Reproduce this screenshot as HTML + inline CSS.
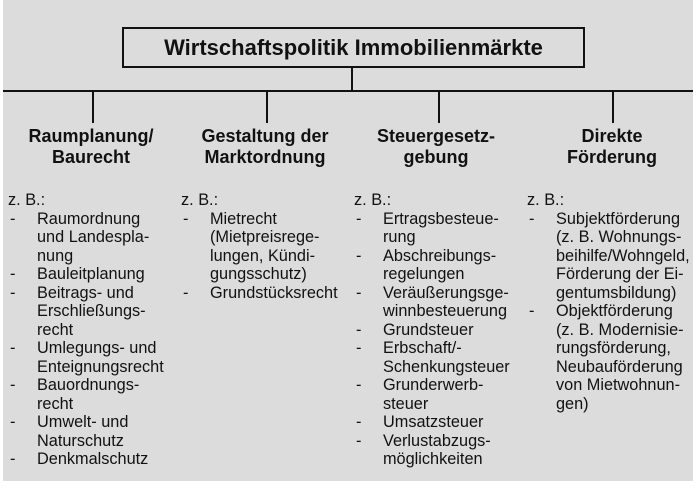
<!DOCTYPE html>
<html><head><meta charset="utf-8"><style>
body{margin:0;width:700px;height:491px;background:#fff;position:relative;overflow:hidden;font-family:"Liberation Sans",sans-serif;color:#111}
#bg{position:absolute;left:3px;top:0;width:690px;height:481px;background:#dcdcdc}
.l{position:absolute;background:#111}
.box{position:absolute;left:122px;top:27px;width:459px;height:37px;border:2px solid #111;font-weight:bold;font-size:22px;text-align:center;line-height:37px}
.h{position:absolute;top:126px;width:180px;margin-left:-90px;text-align:center;font-weight:bold;font-size:18px;line-height:21px}
.c{position:absolute;top:191px;font-size:16.3px;line-height:18.5px;white-space:nowrap}
.c div{position:relative;padding-left:29px}
.c div.d::before{content:"-";position:absolute;left:2px}
.c div.z{padding-left:0}
</style></head><body>
<div id="bg"></div>
<div class="box">Wirtschaftspolitik Immobilienmärkte</div>
<div class="l" style="left:351px;top:66px;width:2px;height:25px"></div>
<div class="l" style="left:3px;top:90px;width:690px;height:2px"></div>
<div class="l" style="left:92px;top:91px;width:2px;height:32px"></div>
<div class="l" style="left:266px;top:91px;width:2px;height:32px"></div>
<div class="l" style="left:438px;top:91px;width:2px;height:32px"></div>
<div class="l" style="left:612px;top:91px;width:2px;height:32px"></div>
<div class="h" style="left:91px">Raumplanung/<br>Baurecht</div>
<div class="h" style="left:265px">Gestaltung der<br>Marktordnung</div>
<div class="h" style="left:436px">Steuergesetz-<br>gebung</div>
<div class="h" style="left:612px">Direkte<br>Förderung</div>
<div class="c" style="left:8px">
<div class="z">z. B.:</div>
<div class="d">Raumordnung</div><div>und Landespla-</div><div>nung</div>
<div class="d">Bauleitplanung</div>
<div class="d">Beitrags- und</div><div>Erschließungs-</div><div>recht</div>
<div class="d">Umlegungs- und</div><div>Enteignungsrecht</div>
<div class="d">Bauordnungs-</div><div>recht</div>
<div class="d">Umwelt- und</div><div>Naturschutz</div>
<div class="d">Denkmalschutz</div>
</div>
<div class="c" style="left:181px">
<div class="z">z. B.:</div>
<div class="d">Mietrecht</div><div>(Mietpreisrege-</div><div>lungen, Kündi-</div><div>gungsschutz)</div>
<div class="d">Grundstücksrecht</div>
</div>
<div class="c" style="left:354px">
<div class="z">z. B.:</div>
<div class="d">Ertragsbesteue-</div><div>rung</div>
<div class="d">Abschreibungs-</div><div>regelungen</div>
<div class="d">Veräußerungsge-</div><div>winnbesteuerung</div>
<div class="d">Grundsteuer</div>
<div class="d">Erbschaft/-</div><div>Schenkungsteuer</div>
<div class="d">Grunderwerb-</div><div>steuer</div>
<div class="d">Umsatzsteuer</div>
<div class="d">Verlustabzugs-</div><div>möglichkeiten</div>
</div>
<div class="c" style="left:527px">
<div class="z">z. B.:</div>
<div class="d">Subjektförderung</div><div>(z. B. Wohnungs-</div><div>beihilfe/Wohngeld,</div><div>Förderung der Ei-</div><div>gentumsbildung)</div>
<div class="d">Objektförderung</div><div>(z. B. Modernisie-</div><div>rungsförderung,</div><div>Neubauförderung</div><div>von Mietwohnun-</div><div>gen)</div>
</div>
</body></html>
